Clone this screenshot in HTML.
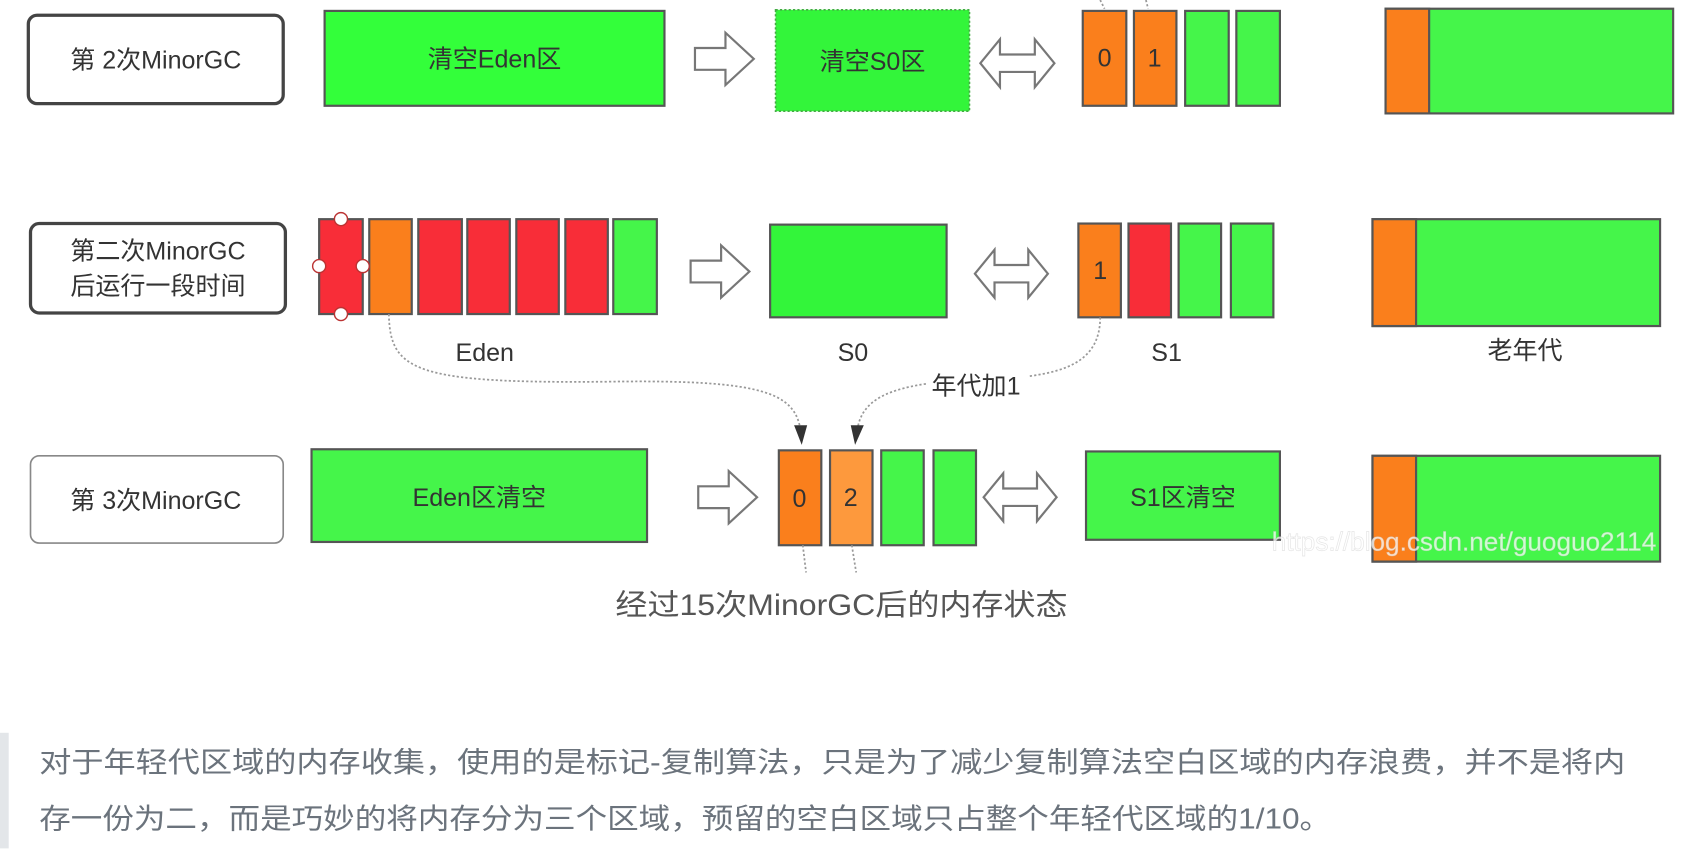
<!DOCTYPE html>
<html><head><meta charset="utf-8"><style>
html,body{margin:0;padding:0;background:#fff;width:1708px;height:868px;overflow:hidden}
svg{display:block}
text{font-family:"Liberation Sans","Noto Sans CJK SC",sans-serif}
</style></head><body>
<svg width="1708" height="868" viewBox="0 0 1568 796" preserveAspectRatio="none" xmlns="http://www.w3.org/2000/svg">
<g stroke="#555" stroke-width="2">
<rect x="26" y="14" width="234" height="81" rx="8" fill="#fff" stroke="#444" stroke-width="3"/>
<rect x="298" y="10" width="312" height="87" fill="#33ff3a"/>
<rect x="712" y="9" width="178" height="93" fill="#33f53a" stroke="#4a4" stroke-dasharray="2 2" stroke-width="1.5"/>
<rect x="994" y="10" width="40" height="87" fill="#fa7f1c"/>
<rect x="1041" y="10" width="39" height="87" fill="#fa7f1c"/>
<rect x="1088" y="10" width="40" height="87" fill="#45f54a"/>
<rect x="1135" y="10" width="40" height="87" fill="#45f54a"/>
<rect x="1272" y="8" width="264" height="96" fill="#45f54a"/>
<rect x="1272" y="8" width="40" height="96" fill="#fa7f1c"/>
<rect x="28" y="205" width="234" height="82" rx="8" fill="#fff" stroke="#444" stroke-width="3"/>
<rect x="293" y="201" width="40" height="87" fill="#f82d38"/>
<rect x="339" y="201" width="39" height="87" fill="#fa7f1c"/>
<rect x="384" y="201" width="40" height="87" fill="#f82d38"/>
<rect x="429" y="201" width="39" height="87" fill="#f82d38"/>
<rect x="474" y="201" width="39" height="87" fill="#f82d38"/>
<rect x="519" y="201" width="39" height="87" fill="#f82d38"/>
<rect x="563" y="201" width="40" height="87" fill="#45f54a"/>
<rect x="707" y="206" width="162" height="85" fill="#33f53a"/>
<rect x="990" y="205" width="39" height="86" fill="#fa7f1c"/>
<rect x="1036" y="205" width="39" height="86" fill="#f82d38"/>
<rect x="1082" y="205" width="39" height="86" fill="#45f54a"/>
<rect x="1130" y="205" width="39" height="86" fill="#45f54a"/>
<rect x="1260" y="201" width="264" height="98" fill="#45f54a"/>
<rect x="1260" y="201" width="40" height="98" fill="#fa7f1c"/>
<rect x="28" y="418" width="232" height="80" rx="8" fill="#fff" stroke="#888" stroke-width="1.5"/>
<rect x="286" y="412" width="308" height="85" fill="#45f54a"/>
<rect x="715" y="413" width="39" height="87" fill="#fa7f1c"/>
<rect x="762" y="413" width="39" height="87" fill="#fd993d"/>
<rect x="809" y="413" width="39" height="87" fill="#45f54a"/>
<rect x="857" y="413" width="39" height="87" fill="#45f54a"/>
<rect x="997" y="414" width="178" height="81" fill="#45f54a"/>
<rect x="1260" y="418" width="264" height="97" fill="#45f54a"/>
<rect x="1260" y="418" width="40" height="97" fill="#fa7f1c"/>
</g>
<g fill="#fff" stroke="#b33" stroke-width="1.3">
<circle cx="313" cy="201" r="6"/><circle cx="313" cy="288" r="6"/>
<circle cx="293" cy="244" r="6"/><circle cx="333" cy="244" r="6"/>
</g>
<g fill="#fff" stroke="#777" stroke-width="2" stroke-linejoin="miter">
<path d="M638,44 L666,44 L666,30 L692,54 L666,78 L666,64 L638,64 Z"/>
<path d="M634,239 L662,239 L662,225 L688,249 L662,273 L662,259 L634,259 Z"/>
<path d="M641,446 L669,446 L669,432 L695,456 L669,480 L669,466 L641,466 Z"/>
<path d="M900,58 L918,36 L918,50 L950,50 L950,36 L968,58 L950,80 L950,66 L918,66 L918,80 Z"/>
<path d="M895,251 L913,229 L913,243 L944,243 L944,229 L962,251 L944,273 L944,259 L913,259 L913,273 Z"/>
<path d="M903,456 L921,434 L921,448 L952,448 L952,434 L970,456 L952,478 L952,464 L921,464 L921,478 Z"/>
</g>
<g fill="none" stroke="#999" stroke-width="1.6" stroke-dasharray="2 2">
<path d="M357,288 C358,340 380,352 560,350 C700,348 730,360 735,395"/>
<path d="M1010,291 C1010,330 980,340 945,345"/>
<path d="M850,352 C810,358 790,370 787,395"/>
<path d="M737,500 L740,525"/><path d="M782,500 L786,525"/>
<path d="M1010,0 L1014,8"/><path d="M1052,0 L1054,8"/>
</g>
<g fill="#333">
<path d="M729,390 L741,390 L736,408 Z"/>
<path d="M781,390 L793,390 L785,408 Z"/>
</g>
<g fill="#333" font-size="23" text-anchor="middle">
<text x="143" y="63">第 2次MinorGC</text>
<text x="454" y="62">清空Eden区</text>
<text x="801" y="64">清空S0区</text>
<text x="1014" y="61">0</text>
<text x="1060" y="61">1</text>
<text x="145" y="238">第二次MinorGC</text>
<text x="145" y="270">后运行一段时间</text>
<text x="1010" y="256">1</text>
<text x="445" y="331">Eden</text>
<text x="783" y="331">S0</text>
<text x="1071" y="331">S1</text>
<text x="1400" y="329">老年代</text>
<text x="896" y="362">年代加1</text>
<text x="143" y="467">第 3次MinorGC</text>
<text x="440" y="464">Eden区清空</text>
<text x="734" y="465">0</text>
<text x="781" y="464">2</text>
<text x="1086" y="464">S1区清空</text>
</g>
<text x="1344" y="505" text-anchor="middle" font-size="24" fill="#fff" fill-opacity="0.75" stroke="#ccc" stroke-opacity="0.5" stroke-width="0.6">https://blog.csdn.net/guoguo2114</text>
<text x="565" y="564" font-size="27" fill="#555" textLength="415" lengthAdjust="spacingAndGlyphs">经过15次MinorGC后的内存状态</text>
<rect x="0" y="672" width="8" height="106" fill="#e3e6e9"/>
<g fill="#6b737c" font-size="26">
<text x="36" y="708" textLength="1456" lengthAdjust="spacingAndGlyphs">对于年轻代区域的内存收集，使用的是标记-复制算法，只是为了减少复制算法空白区域的内存浪费，并不是将内</text>
<text x="36" y="760" textLength="1186" lengthAdjust="spacingAndGlyphs">存一份为二，而是巧妙的将内存分为三个区域，预留的空白区域只占整个年轻代区域的1/10。</text>
</g>
</svg>
</body></html>
